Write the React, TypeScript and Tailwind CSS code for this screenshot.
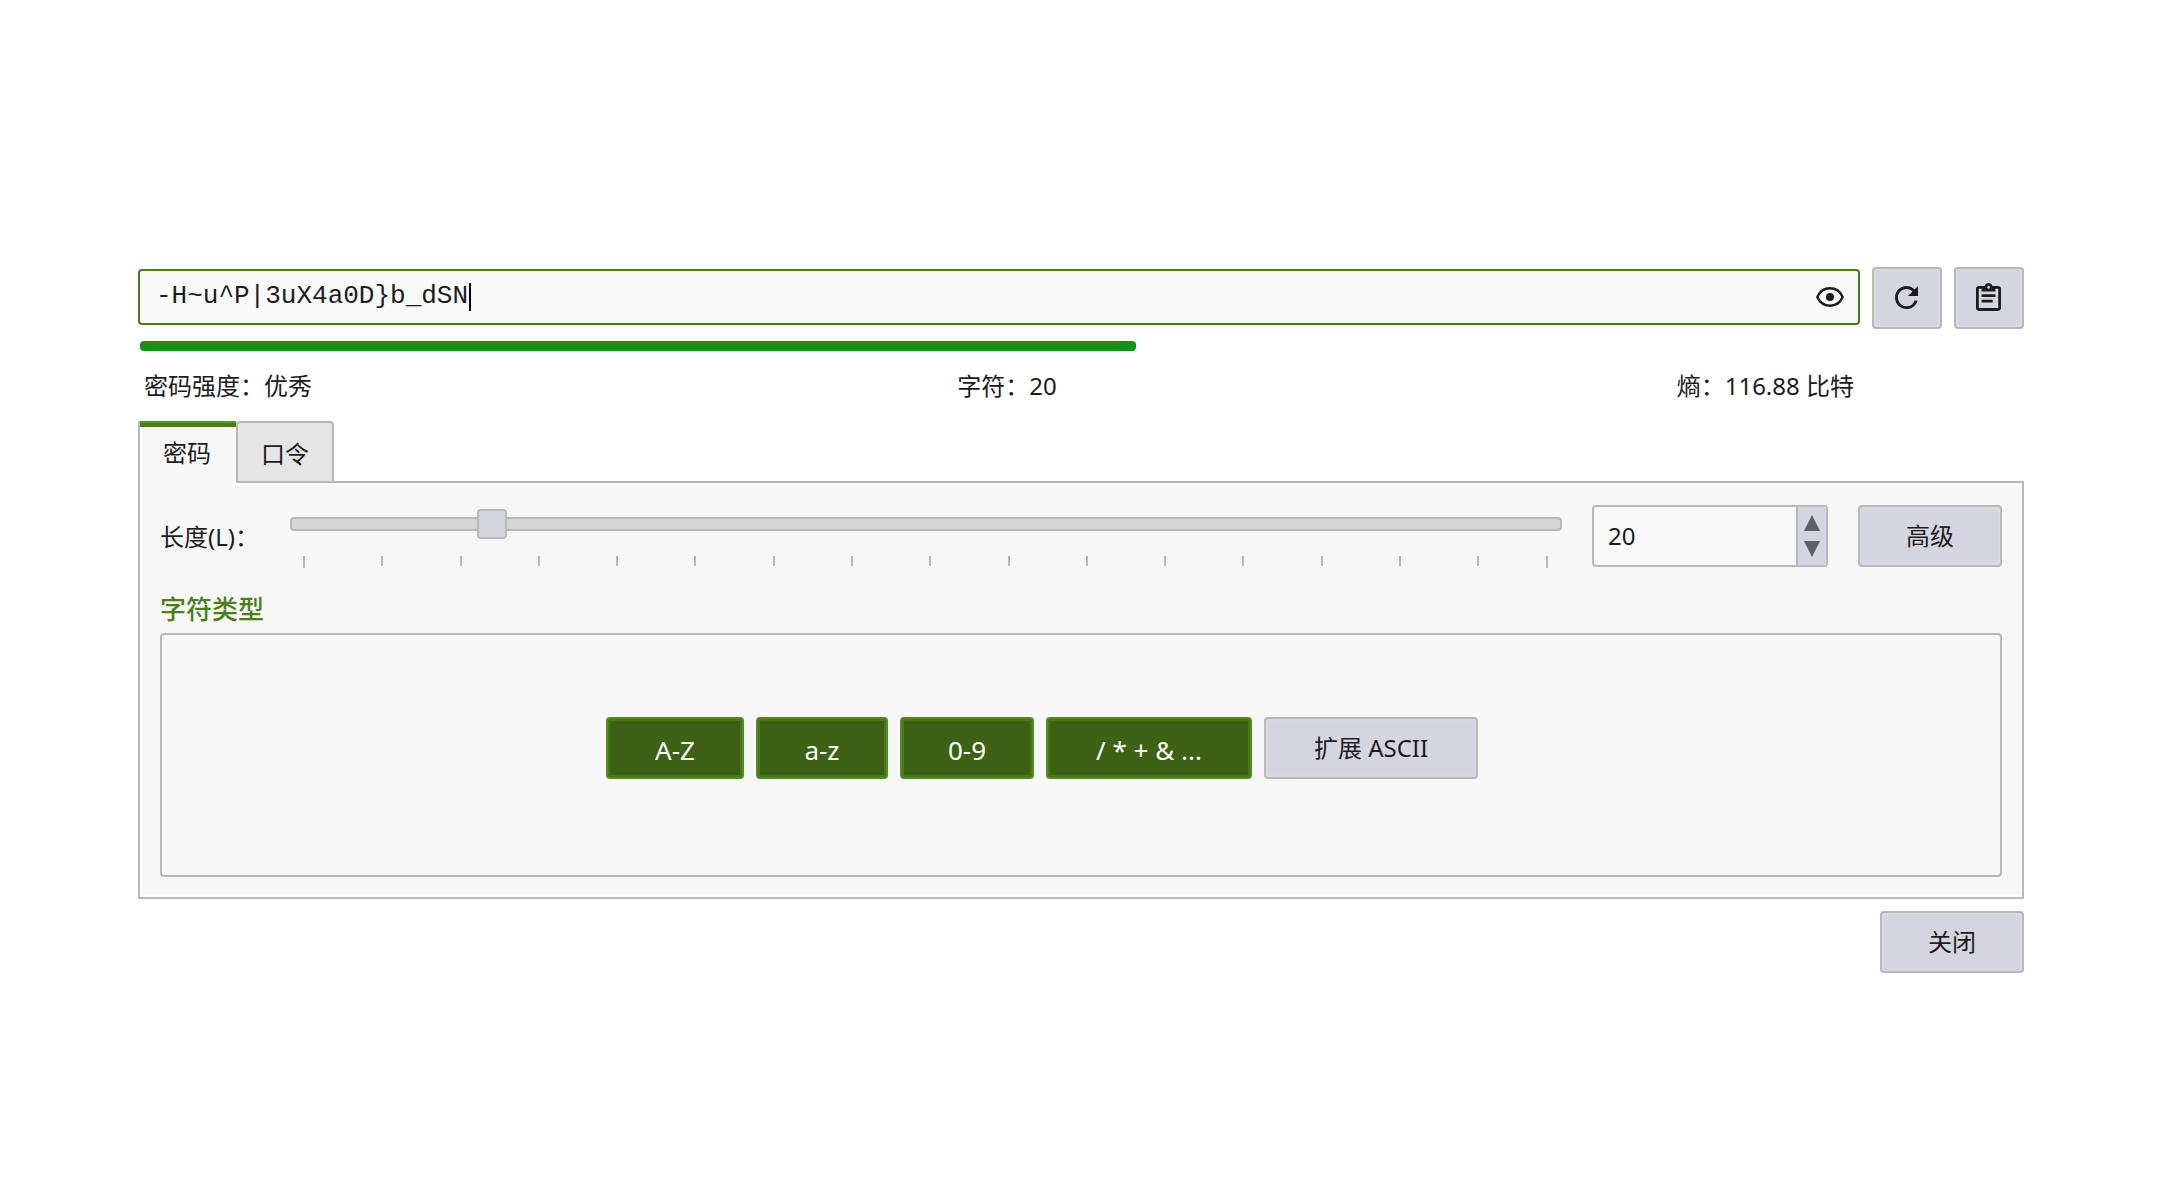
import { useState } from "react";

const MIN = 1;
const MAX = 128;
const STEP = 8;
const ENTROPY = 116.88;

const buttonClass =
  "h-[62px] rounded-[4px] border-2 border-[#b8b8b8] bg-[#d5d5df] text-[#1c1c1e] shadow-[inset_0_0_0_2px_#dadae3]";

const iconButtonClass = "flex w-[70px] items-center justify-center pr-0.5 pb-0.5";

const charTypes = [
  { label: "A-Z", width: "w-[138px]" },
  { label: "a-z", width: "w-[132px]" },
  { label: "0-9", width: "w-[134px]" },
  { label: "/ * + & ...", width: "w-[206px]" },
];

function Eye() {
  return (
    <svg viewBox="0 0 28 20" className="h-5 w-7" fill="none" stroke="currentColor" strokeWidth="2.4" aria-hidden="true">
      <path d="M1.3 10C3.7 4.600 8.500 1.300 14 1.300S24.300 4.600 26.700 10C24.300 15.400 19.500 18.700 14 18.700S3.700 15.400 1.300 10Z" />
      <circle cx="14" cy="10" r="4" fill="currentColor" stroke="none" />
    </svg>
  );
}

function Refresh() {
  return (
    <svg viewBox="4 4 16 16" className="size-[23px]" fill="currentColor" aria-hidden="true">
      <path d="M17.650 6.350A7.958 7.958 0 0 0 12 4c-4.420 0-7.990 3.580-7.990 8s3.570 8 7.990 8c3.730 0 6.840-2.550 7.730-6h-2.080A5.990 5.990 0 0 1 12 18c-3.310 0-6-2.690-6-6s2.690-6 6-6c1.660 0 3.140.69 4.220 1.780L13 11h7V4l-2.350 2.350z" />
    </svg>
  );
}

function Clipboard() {
  return (
    <svg viewBox="3 1 18 20" className="h-7 w-[25px]" fill="currentColor" aria-hidden="true">
      <path d="M19 3h-4.180C14.400 1.840 13.300 1 12 1s-2.400.84-2.820 2H5c-1.100 0-2 .9-2 2v14c0 1.100.9 2 2 2h14c1.100 0 2-.9 2-2V5c0-1.100-.9-2-2-2zm-7 0c.55 0 1 .45 1 1s-.45 1-1 1-1-.45-1-1 .45-1 1-1zm7 16H5V5h2v2h10V5h2v14zM7 9h10v2H7zm0 4h8v2H7z" />
    </svg>
  );
}

export default function App() {
  const [password, setPassword] = useState("-H~u^P|3uX4a0D}b_dSN");
  const [length, setLength] = useState(20);
  const [active, setActive] = useState<string[]>(charTypes.map((c) => c.label));

  const clamp = (n: number) => setLength(Math.min(MAX, Math.max(MIN, n)));
  const toggle = (label: string) =>
    setActive((cur) => (cur.includes(label) ? cur.filter((l) => l !== label) : [...cur, label]));

  const segments: number[] = [];
  for (let v = MIN; v < MAX; v += STEP) segments.push(Math.min(STEP, MAX - v));

  return (
    <main className="min-h-screen bg-white px-[138px] pt-[267px] pb-16 font-['Noto_Sans','Noto_Sans_CJK_SC',sans-serif] text-[24px] leading-8 text-[#1c1c1e]">
      <div className="flex items-start gap-3">
        <div className="mt-0.5 flex h-14 flex-1 items-center rounded-[4px] border-2 border-[#4a7a1a] bg-[#f9f9f9] pr-3.5 pl-4">
          <div className="flex min-w-0 flex-1 items-center">
            <input
              aria-label="密码"
              value={password}
              onChange={(e) => setPassword(e.target.value)}
              size={20}
              className="h-9 w-[313px] bg-transparent pb-0.5 font-['Liberation_Mono',monospace] text-[26px] outline-none"
            />
            <span className="h-7 w-0.5 bg-black" />
          </div>
          <button type="button" aria-label="显示密码">
            <Eye />
          </button>
        </div>
        <button type="button" aria-label="重新生成" className={`${buttonClass} ${iconButtonClass}`}>
          <Refresh />
        </button>
        <button type="button" aria-label="复制" className={`${buttonClass} ${iconButtonClass}`}>
          <Clipboard />
        </button>
      </div>

      <div className="mr-[164px]">
        <div className="mx-0.5 mt-3">
          <div className="h-2.5 rounded-[4px] bg-[#149018]" style={{ width: `${(ENTROPY / 200) * 99.2}%` }} />
        </div>
        <div className="mx-1.5 mt-[19px] grid grid-cols-3">
          <span>密码强度：优秀</span>
          <span className="pl-4 text-center">字符：20</span>
          <span className="text-right">熵：116.88 比特</span>
        </div>
      </div>

      <div role="tablist" className="relative mt-[19px] -mb-1 flex items-start">
        <button
          type="button"
          role="tab"
          aria-selected="true"
          className="flex h-16 w-[98px] flex-col items-center border-l-2 border-[#b8b8b8] bg-[#f7f7f7] shadow-[inset_2px_0_0_#fff,inset_-2px_0_0_#fff]"
        >
          <span className="h-1.5 w-full border-t-2 border-[#5a962a] bg-[#4a7c1c]" />
          <span className="mt-2.5 pr-0.5">密码</span>
        </button>
        <button
          type="button"
          role="tab"
          aria-selected="false"
          className="h-[62px] w-[98px] rounded-t-[4px] border-2 border-[#b8b8b8] bg-[#e5e5e5] pt-1"
        >
          口令
        </button>
      </div>

      <section className="border-2 border-[#b8b8b8] bg-[#f7f7f7] px-5 pt-[22px] pb-5 shadow-[inset_0_0_0_2px_#fff]">
        <div className="flex items-start">
          <label htmlFor="length" className="mt-4 w-[130px] shrink-0">
            长度(L)：
          </label>
          <div className="min-w-0 flex-1 pt-1">
            <input
              id="length"
              type="range"
              min={MIN}
              max={MAX}
              value={length}
              onChange={(e) => setLength(Number(e.target.value))}
              className="block h-[30px] w-full appearance-none bg-transparent [&::-webkit-slider-runnable-track]:h-3.5 [&::-webkit-slider-runnable-track]:rounded-[4px] [&::-webkit-slider-runnable-track]:border-2 [&::-webkit-slider-runnable-track]:border-[#b8b8b8] [&::-webkit-slider-runnable-track]:bg-[#d6d6d6] [&::-webkit-slider-thumb]:-mt-2.5 [&::-webkit-slider-thumb]:size-[30px] [&::-webkit-slider-thumb]:appearance-none [&::-webkit-slider-thumb]:rounded-[4px] [&::-webkit-slider-thumb]:border-2 [&::-webkit-slider-thumb]:border-[#b8b8b8] [&::-webkit-slider-thumb]:bg-[#d5d5df]"
            />
            <div className="mr-3.5 ml-[13px] mt-[17px] flex h-3 items-start">
              {segments.map((s, i) => (
                <span
                  key={i}
                  className={`border-l-2 border-[#b8b8b8] ${i === 0 ? "h-3" : "h-2.5"}`}
                  style={{ flex: `${s} 0 0px` }}
                />
              ))}
              <span className="h-3 w-0.5 bg-[#b8b8b8]" />
            </div>
          </div>
          <div className="ml-[30px] flex h-[62px] w-[236px] overflow-hidden rounded-[4px] border-2 border-[#b8b8b8] bg-[#f9f9f9]">
            <input
              aria-label="长度"
              inputMode="numeric"
              value={length}
              onChange={(e) => clamp(Number(e.target.value) || MIN)}
              className="min-w-0 flex-1 bg-transparent pl-3.5 outline-none"
            />
            <div className="flex w-[30px] flex-col items-center justify-center gap-2.5 border-l-2 border-[#b8b8b8] bg-[#d5d5df] text-[#5e6066]">
              <button type="button" aria-label="增加" onClick={() => clamp(length + 1)}>
                <svg viewBox="0 0 16 16" className="size-4" fill="currentColor" aria-hidden="true">
                  <path d="M8 0L16 16H0Z" />
                </svg>
              </button>
              <button type="button" aria-label="减少" onClick={() => clamp(length - 1)}>
                <svg viewBox="0 0 16 16" className="size-4" fill="currentColor" aria-hidden="true">
                  <path d="M8 16L0 0H16Z" />
                </svg>
              </button>
            </div>
          </div>
          <button type="button" className={`${buttonClass} ml-[30px] w-36`}>
            高级
          </button>
        </div>

        <fieldset className="mt-[25px]">
          <legend className="mb-2 text-[26px] leading-8 font-medium text-[#4a7f1c]">字符类型</legend>
          <div className="flex justify-center gap-3 rounded-[4px] border-2 border-[#b8b8b8] pt-[82px] pr-[78px] pb-24">
            {charTypes.map((c) => (
              <button
                key={c.label}
                type="button"
                aria-pressed={active.includes(c.label)}
                onClick={() => toggle(c.label)}
                className={`${c.width} h-[62px] rounded-[4px] border-2 pt-1 text-[26px] ${
                  active.includes(c.label)
                    ? "border-[#558c22] bg-[#3d6216] text-white shadow-[inset_0_0_0_2px_#48761a]"
                    : "border-[#b8b8b8] bg-[#d5d5df]"
                }`}
              >
                {c.label}
              </button>
            ))}
            <button type="button" className={`${buttonClass} w-[214px]`}>
              扩展 ASCII
            </button>
          </div>
        </fieldset>
      </section>

      <div className="mt-3 flex justify-end">
        <button type="button" className={`${buttonClass} w-36`}>
          关闭
        </button>
      </div>
    </main>
  );
}
